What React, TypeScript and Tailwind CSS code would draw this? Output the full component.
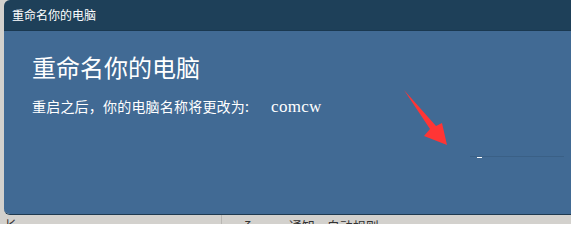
import React from "react";

export default function App() {
  const cjk = { fontFamily: '"Noto Sans CJK SC", "Noto Sans", sans-serif' };
  return (
    <div className="relative w-[571px] h-[224px] overflow-hidden bg-[#d3d1cd]" style={cjk}>
      <div className="ml-1 w-[567px] h-[215px] flex flex-col rounded-tl-[6px] rounded-bl-[6px] overflow-hidden border-b border-[#1f3a50]">
        <div className="h-[31px] shrink-0 bg-[#1e4059] pl-2 flex items-center text-[12px] text-white border-b border-[#1a3850]">
          重命名你的电脑
        </div>
        <div className="flex-1 bg-[#416a94] pl-7 pt-[20px] text-white">
          <div className="text-[24px] leading-[32px] font-normal">重命名你的电脑</div>
          <div className="mt-[11px] text-[14px] leading-[24px] flex items-baseline">
            <span className="tracking-[0.2px]">重启之后，你的电脑名称将更改为:</span>
            <span className="ml-[22px] text-[17px] tracking-[0.3px]" style={{ fontFamily: '"Liberation Serif", serif' }}>
              comcw
            </span>
          </div>
        </div>
      </div>
      <div className="flex h-[9px] text-[13px] text-[#333] leading-none">
        <div className="w-[222px] pl-1 pt-[3px] border-r border-[#b9b7b3]">长</div>
        <div className="flex-1 flex pt-[4px]">
          <span className="ml-[22px] text-[14px]">ζ</span>
          <span className="ml-[38px]">通知</span>
          <span className="ml-[12px]">自动规则</span>
        </div>
      </div>
      <div className="absolute left-[470px] top-[156px] w-[94px] h-px bg-[#3a6086]" />
      <div className="absolute left-[477px] top-[157px] w-[5px] h-px bg-white" />
      <svg className="absolute left-[400px] top-[86px]" width="52" height="64" viewBox="0 0 52 64">
        <path d="M4 4 L30 43 L24 50 L47 59 L42 37 L36 40 Z" fill="#ff3535" />
      </svg>
    </div>
  );
}
